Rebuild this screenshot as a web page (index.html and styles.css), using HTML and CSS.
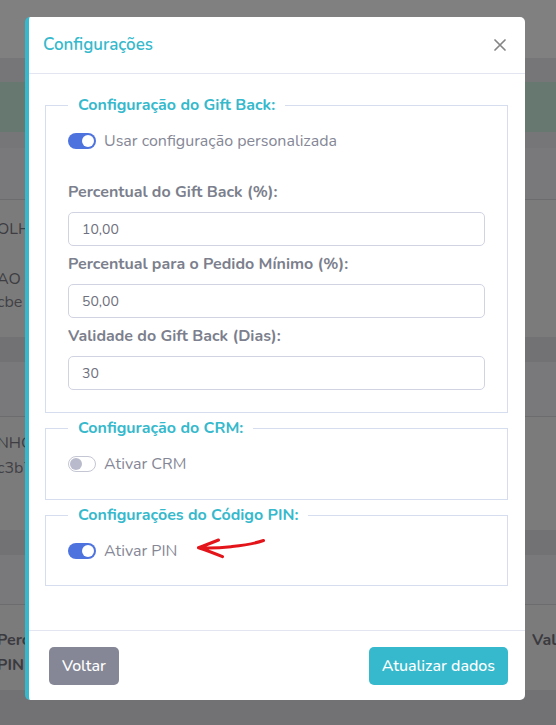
FILE: index.html
```html
<!DOCTYPE html>
<html lang="pt-BR">
<head>
<meta charset="utf-8">
<title>Configurações</title>
<link rel="stylesheet" href="styles.css">
</head>
<body>
<div class="page">
  <div class="topbar"></div>
  <div class="band band-24"></div>
  <div class="alert"></div>
  <div class="band band-16"></div>

  <div class="card">
    <div class="card-head head-52"></div>
    <div class="card-body body-1">
      <div class="cell-left">
        <p class="bt bt-first">OLHOS</p>
        <p class="bt bt-gap">AO</p>
        <p class="bt bt-sub">cbe</p>
      </div>
    </div>
  </div>
  <div class="band band-25"></div>

  <div class="card">
    <div class="card-head head-55"></div>
    <div class="card-body body-2">
      <div class="cell-left">
        <p class="bt bt-first2">NHO</p>
        <p class="bt bt-sub2">c3b7</p>
      </div>
    </div>
  </div>
  <div class="band band-25"></div>

  <div class="card">
    <div class="card-head head-50"></div>
    <div class="card-body body-3">
      <div class="cell-left">
        <p class="bt bt-bold bt-first3">Percentual</p>
        <p class="bt bt-bold">PIN</p>
      </div>
      <div class="cell-right">
        <p class="bt bt-bold bt-first3">Valor</p>
      </div>
    </div>
  </div>
  <div class="band band-rest"></div>
</div>

<div class="modal">
  <div class="modal-header">
    <h5 class="modal-title">Configurações</h5>
    <span class="close" aria-label="Fechar">
      <svg width="12" height="12" viewBox="0 0 12 12"><path d="M1 1 L11 11 M11 1 L1 11" stroke="#858585" stroke-width="1.7" stroke-linecap="round" fill="none"/></svg>
    </span>
  </div>

  <div class="modal-body">
    <fieldset class="fs">
      <legend>Configuração do Gift Back:</legend>
      <div class="switch-row switch-row-lead">
        <span class="switch on"><span class="knob"></span></span>
        <span class="switch-label">Usar configuração personalizada</span>
      </div>
      <div class="group">
        <label class="field-label">Percentual do Gift Back (%):</label>
        <div class="input">10,00</div>
      </div>
      <div class="group">
        <label class="field-label">Percentual para o Pedido Mínimo (%):</label>
        <div class="input">50,00</div>
      </div>
      <div class="group">
        <label class="field-label">Validade do Gift Back (Dias):</label>
        <div class="input">30</div>
      </div>
    </fieldset>

    <fieldset class="fs fs-compact">
      <legend>Configuração do CRM:</legend>
      <div class="switch-row">
        <span class="switch off"><span class="knob"></span></span>
        <span class="switch-label">Ativar CRM</span>
      </div>
    </fieldset>

    <fieldset class="fs fs-compact fs-last">
      <legend>Configurações do Código PIN:</legend>
      <div class="switch-row">
        <span class="switch on"><span class="knob"></span></span>
        <span class="switch-label">Ativar PIN</span>
      </div>
    </fieldset>
  </div>

  <div class="modal-footer">
    <button class="btn btn-secondary">Voltar</button>
    <button class="btn btn-info">Atualizar dados</button>
  </div>

  <svg class="arrow" width="70" height="24" viewBox="0 0 70 24">
    <path d="M21.5 3 Q9 8 1.5 10.7 Q12 14 25.5 19.7 M1.5 10.7 C14 11.5 24 10.8 34 9.7 S55 7.5 66.5 3.5" stroke="#e3151b" stroke-width="3" stroke-linecap="round" stroke-linejoin="round" fill="none"/>
  </svg>
</div>
</body>
</html>
```

FILE: styles.css
```css
* { box-sizing: border-box; }

html, body {
  margin: 0;
  padding: 0;
}

body {
  width: 556px;
  height: 725px;
  overflow: hidden;
  font-family: Nunito, Lato, "Noto Sans", sans-serif;
  background: #7b7b7b;
}

/* ---------- page behind the backdrop ---------- */
.page {
  display: flex;
  flex-direction: column;
  height: 725px;
}

.topbar { height: 58px; background: #808080; flex: none; }
.band { background: #767679; flex: none; }
.band-24 { height: 24px; }
.band-16 { height: 16px; }
.band-25 { height: 25px; background: #727275; }
.band-rest { flex: 1; background: #727275; }
.alert { height: 50px; background: #66786f; flex: none; }

.card { background: #7b7b7b; flex: none; }
.card-head {
  background: #79797b;
  border-bottom: 1px solid #6c6c6f;
}
.head-52 { height: 52px; }
.head-55 { height: 55px; }
.head-50 { height: 50px; }

.card-body {
  display: flex;
  justify-content: space-between;
}
.body-1 { height: 137px; }
.body-2 { height: 113px; }
.body-3 { height: 85px; }

.cell-left { width: 200px; }
.cell-right { width: 24px; overflow: hidden; }

.bt {
  margin: 0;
  font-size: 16px;
  line-height: 20px;
  color: #3d3d42;
  white-space: nowrap;
}
.cell-left .bt { text-indent: -3px; }
.bt-first { margin-top: 19px; }
.bt-gap { margin-top: 30px; }
.bt-sub { margin-top: 3px; color: #414146; }
.bt-first2 { margin-top: 16px; }
.bt-sub2 { margin-top: 5px; color: #414146; }
.bt-first3 { margin-top: 25px; margin-bottom: 5px; }
.bt-bold { font-weight: 700; color: #3a3a3f; }

/* ---------- modal ---------- */
.modal {
  position: absolute;
  left: 25px;
  top: 17px;
  width: 500px;
  background: #fff;
  border-left: 4px solid #36b9cc;
  border-radius: 5px;
  display: flex;
  flex-direction: column;
}

.modal-header {
  height: 57px;
  display: flex;
  align-items: center;
  justify-content: space-between;
  padding: 0 19px 0 14px;
  border-bottom: 1px solid #e3e6f0;
}

.modal-title {
  margin: 0;
  font-size: 17px;
  font-weight: 600;
  color: #36b9cc;
  line-height: 24px;
}

.close {
  display: flex;
  width: 12px;
  height: 12px;
}

.modal-body {
  padding: 16px 17px 44px 16px;
}

.fs {
  margin: 0;
  border: 1px solid #d6ddef;
  padding: 11px 22px 22px 22px;
  min-width: 0;
}

.fs legend {
  padding: 0 10px;
  font-size: 16px;
  line-height: 30px;
  font-weight: 700;
  color: #36b9cc;
}

.fs-compact { padding-bottom: 25px; }
.fs-last { padding-bottom: 24px; }

.switch-row {
  display: flex;
  align-items: center;
  gap: 8px;
  height: 20px;
}
.switch-row-lead { margin-bottom: 31px; }

.switch {
  width: 28px;
  height: 16px;
  border-radius: 8px;
  display: flex;
  align-items: center;
  padding: 0 2px;
  flex: none;
}
.switch .knob {
  width: 12px;
  height: 12px;
  border-radius: 50%;
}
.switch.on { background: #4e73df; justify-content: flex-end; }
.switch.on .knob { background: #fff; }
.switch.off { background: #fff; border: 1px solid #c4c6d4; padding: 0 1px; }
.switch.off .knob { background: #b9bbcc; }

.switch-label {
  font-size: 16px;
  color: #858796;
  line-height: 20px;
}

.group + .group { margin-top: 8px; }

.field-label {
  display: block;
  font-size: 16px;
  line-height: 20px;
  font-weight: 700;
  color: #7c7f8d;
  margin-bottom: 10px;
}

.input {
  height: 34px;
  border: 1px solid #d1d3e2;
  border-radius: 5px;
  padding: 0 13px;
  display: flex;
  align-items: center;
  font-size: 14px;
  color: #6e707e;
}

.modal-footer {
  display: flex;
  justify-content: space-between;
  align-items: center;
  padding: 16px 17px 15px 20px;
  border-top: 1px solid #e3e6f0;
}

.btn {
  height: 38px;
  padding: 0 13px;
  border: 0;
  border-radius: 5px;
  font-family: inherit;
  font-size: 16px;
  font-weight: 500;
  color: #fff;
  cursor: pointer;
}
.btn-secondary { background: #858796; }
.btn-info { background: #36b9cc; }

.arrow {
  position: absolute;
  left: 168px;
  top: 520px;
}
```
